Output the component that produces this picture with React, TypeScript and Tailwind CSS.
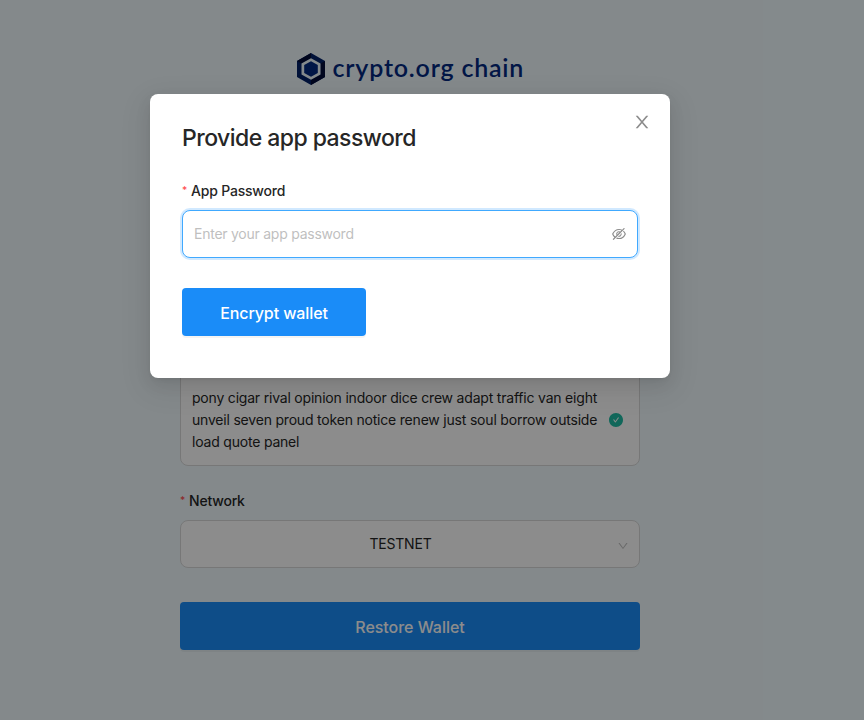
import { AiFillCheckCircle, AiOutlineDown, AiOutlineEyeInvisible } from "react-icons/ai";

function Logo() {
  return (
    <div className="flex h-8 items-center text-[#032980]">
      <svg className="shrink-0" width="28" height="32" viewBox="0 0 28 32">
        <path d="M14 0 28 8v16l-14 8L0 24V8z" fill="#022168" />
        <path d="M0 8 14 0v5.200L4.500 10.600zM28 8v16l-14 8v-5.200l9.500-5.400V10.600z" fill="#020b38" />
        <path d="M14 5.200 23.500 10.600v10.800L14 26.800 4.500 21.400V10.600z" fill="#f0fafe" />
        <path d="M14 8.200 20.800 12.100v7.800L14 23.800 7.200 19.900v-7.800z" fill="#032980" />
      </svg>
      <span className="relative -top-0.5 ml-2 w-[191px] font-['Lato',sans-serif] text-[25px] leading-8 font-semibold tracking-[0.8px] whitespace-nowrap">
        crypto.org chain
      </span>
    </div>
  );
}

function CloseIcon() {
  return (
    <svg className="-mr-[14px] size-5 text-[#8c8c8c]" viewBox="0 0 1024 1024" fill="currentColor">
      <path d="M563.8 512l262.5-312.9c4.400-5.200.7-13.100-6.100-13.100h-79.800c-4.700 0-9.200 2.100-12.300 5.700L511.600 449.800 295.100 191.700c-3-3.600-7.500-5.700-12.300-5.700H203c-6.800 0-10.500 7.900-6.100 13.100L459.400 512 196.900 824.900A7.950 7.950 0 0 0 203 838h79.800c4.700 0 9.200-2.100 12.300-5.700l216.500-258.100 216.500 258.100c3 3.600 7.500 5.700 12.300 5.700h79.800c6.800 0 10.500-7.900 6.100-13.100L563.800 512z" />
    </svg>
  );
}

function Label({ text }: { text: string }) {
  return (
    <div className="flex h-[22px] items-center text-sm font-medium tracking-[-0.2px]">
      <span className="mr-1 pb-0.5 text-[10px] text-[#ff4d4f]">*</span>
      <span>{text}</span>
    </div>
  );
}

function RestoreForm() {
  return (
    <div className="flex w-[820px] flex-col items-center pt-[53px]">
      <Logo />
      <div className="mt-[253px] w-[460px]">
        <div className="flex h-32 items-center rounded-lg border border-[#d9d9d9] bg-white pr-[15px] pl-[11px]">
          <div className="flex-1 pt-9 text-sm leading-[22px] tracking-[-0.2px] whitespace-nowrap">
            <div>pony cigar rival opinion indoor dice crew adapt traffic van eight</div>
            <div>unveil seven proud token notice renew just soul borrow outside</div>
            <div>load quote panel</div>
          </div>
          <AiFillCheckCircle className="mt-9 size-4 text-[#20bca4]" />
        </div>
        <div className="mt-6">
          <Label text="Network" />
        </div>
        <div className="mt-2 flex h-12 items-center rounded-lg border border-[#d9d9d9] bg-white pr-[10px] text-sm">
          <span className="flex-1 pl-[3px] text-center tracking-[-0.2px]">TESTNET</span>
          <AiOutlineDown className="mt-[3px] size-3 text-[#bfbfbf]" />
        </div>
        <button className="mt-[34px] flex h-12 w-full items-center justify-center rounded bg-[#1a8cf8] pt-0.5 font-medium tracking-[-0.03px] text-white shadow-[0_2px_0_rgba(0,0,0,0.045)]">
          Restore Wallet
        </button>
      </div>
    </div>
  );
}

function PasswordModal() {
  return (
    <div className="flex h-[284px] w-[520px] flex-col items-start rounded-lg bg-white px-8 pt-[18px] shadow-[0_3px_6px_-4px_rgba(0,0,0,0.12),0_6px_16px_0_rgba(0,0,0,0.08),0_9px_28px_8px_rgba(0,0,0,0.05)]">
      <div className="flex w-full items-start justify-between">
        <h1 className="pt-[10px] text-[23px] leading-8 font-medium tracking-[-0.54px]">Provide app password</h1>
        <CloseIcon />
      </div>
      <div className="mt-[26px]">
        <Label text="App Password" />
      </div>
      <div className="mt-2 flex h-12 w-full items-center rounded-lg border border-[#40a9ff] bg-white pr-[10px] pl-[11px] shadow-[0_0_0_2px_rgba(24,144,255,0.2)]">
        <span className="flex-1 text-sm tracking-[-0.25px] text-[#bfbfbf]">Enter your app password</span>
        <AiOutlineEyeInvisible className="size-4 text-[#8c8c8c]" />
      </div>
      <button className="mt-[30px] flex h-12 w-[184px] items-center justify-center rounded bg-[#1a8cf8] pt-0.5 font-medium tracking-[-0.1px] text-white shadow-[0_2px_0_rgba(0,0,0,0.045)]">
        Encrypt wallet
      </button>
    </div>
  );
}

export default function App() {
  return (
    <div className="relative h-[720px] w-[864px] overflow-hidden bg-[#f0fafe] font-['Inter','Liberation_Sans',sans-serif] text-[#262626]">
      <RestoreForm />
      <div className="absolute inset-0 bg-black/45">
        <div className="flex w-[820px] justify-center pt-[94px]">
          <PasswordModal />
        </div>
      </div>
    </div>
  );
}
